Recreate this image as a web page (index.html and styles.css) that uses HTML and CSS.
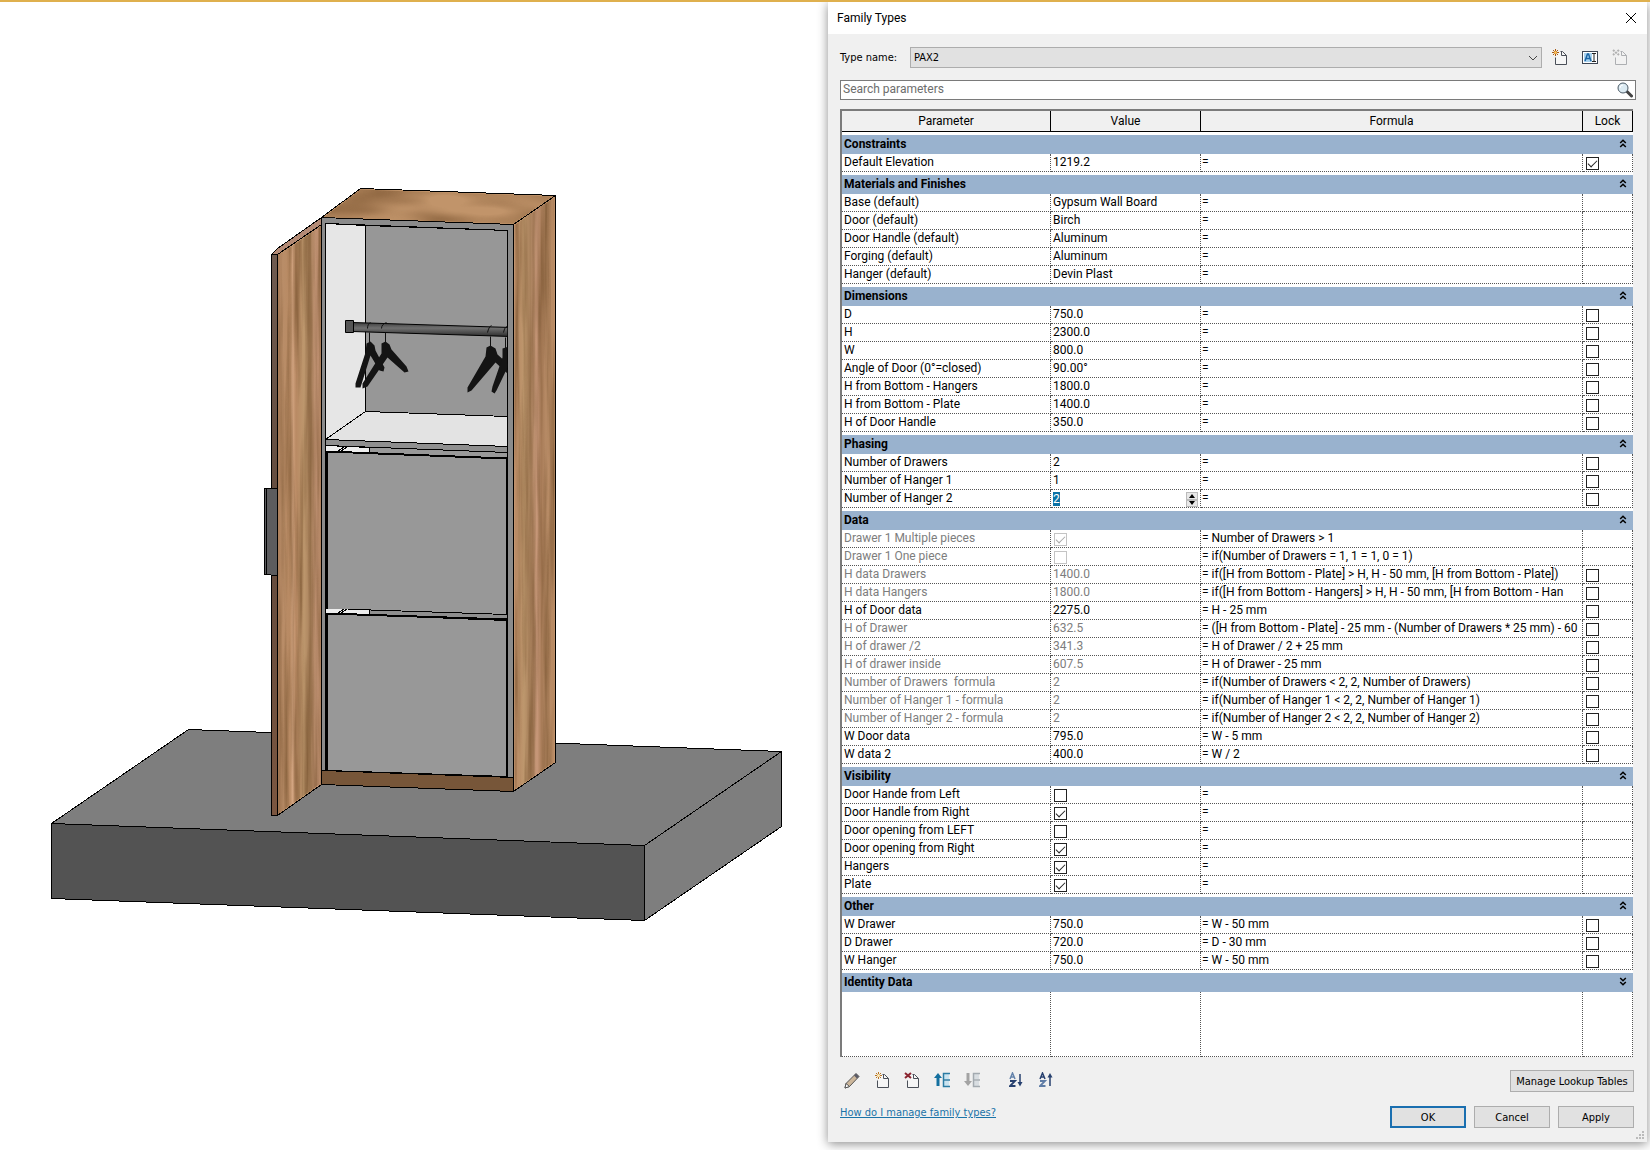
FILE: index.html
```html
<!DOCTYPE html>
<html lang="en">
<head>
  <meta charset="UTF-8">
  <meta name="viewport" content="width=device-width, initial-scale=1.0">
  <title>Family Types</title>
  <link rel="stylesheet" href="styles.css">
</head>
<body>

  <!-- Shared icons -->
  <svg class="defs" width="0" height="0" aria-hidden="true">
    <symbol id="icon-collapse" viewBox="0 0 8 9">
      <path d="M1.2 4 4 1.2 6.8 4M1.2 8 4 5.2 6.8 8" fill="none" stroke="#000" stroke-width="1.5"/>
    </symbol>
    <symbol id="icon-expand" viewBox="0 0 8 9">
      <path d="M1.2 1 4 3.8 6.8 1M1.2 5 4 7.8 6.8 5" fill="none" stroke="#000" stroke-width="1.5"/>
    </symbol>
    <symbol id="icon-page" viewBox="0 0 16 17">
      <path d="M8.5 2.5H10.5L14.5 6.5V15.5H3.5V8.5" fill="#f6f6f6" stroke="#4a4f58"/>
      <path d="M9.5 2.5V6.5H14.5" fill="none" stroke="#4a4f58"/>
    </symbol>
  </svg>

  <main class="workspace">
    <section class="view" aria-label="3D view">
      <svg class="scene" viewBox="-0.5 1.5 828 1148" preserveAspectRatio="xMinYMin meet" role="img" aria-label="Wardrobe with open door">
        <defs>
          <linearGradient id="wood" gradientUnits="userSpaceOnUse" x1="277" y1="0" x2="321" y2="0" spreadMethod="repeat">
            <stop offset="0" stop-color="#a87c58"/>
            <stop offset=".12" stop-color="#b98d68"/>
            <stop offset=".28" stop-color="#b88a63"/>
            <stop offset=".34" stop-color="#d3a581"/>
            <stop offset=".42" stop-color="#b98a64"/>
            <stop offset=".6" stop-color="#bd976d"/>
            <stop offset=".75" stop-color="#a9815c"/>
            <stop offset=".9" stop-color="#c8987a"/>
            <stop offset="1" stop-color="#a87c58"/>
          </linearGradient>
          <linearGradient id="rod" x1="0" y1="0" x2="0" y2="1">
            <stop offset="0" stop-color="#3c3c3c"/>
            <stop offset=".4" stop-color="#707070"/>
            <stop offset="1" stop-color="#2c2c2c"/>
          </linearGradient>
          <linearGradient id="edge" x1="0" y1="0" x2="0" y2="1">
            <stop offset="0" stop-color="#6f5b50"/>
            <stop offset=".5" stop-color="#634b3d"/>
            <stop offset="1" stop-color="#7b5640"/>
          </linearGradient>
          <filter id="grain" x="0" y="0" width="1" height="1" color-interpolation-filters="sRGB">
            <feTurbulence type="fractalNoise" baseFrequency=".16 .006" numOctaves="3" seed="4"/>
            <feColorMatrix values="0 0 0 0 .46  0 0 0 0 .32  0 0 0 0 .18  1.4 0 0 0 -.5"/>
            <feComposite in2="SourceGraphic" operator="in"/>
          </filter>
          <filter id="grain-top" x="0" y="0" width="1" height="1" color-interpolation-filters="sRGB">
            <feTurbulence type="fractalNoise" baseFrequency=".012 .05" numOctaves="2" seed="9"/>
            <feColorMatrix values="0 0 0 0 .48  0 0 0 0 .33  0 0 0 0 .19  1.5 0 0 0 -.5"/>
            <feComposite in2="SourceGraphic" operator="in"/>
          </filter>
          <clipPath id="inside"><path d="M326 223 507 230V446L326 439Z"/></clipPath>
        </defs>

        <!-- floor slab -->
        <g class="solid">
          <path d="M188 729 781 751 644 845 51 823Z" fill="#7e7e7e"/>
          <path d="M51 823 644 845V920L51 898Z" fill="#535353"/>
          <path d="M644 845 781 751V826L644 920Z" fill="#7e7e7e"/>
        </g>

        <!-- cabinet -->
        <g class="solid">
          <path d="M360 188 555 195 513 224 321 217Z" fill="#c1946a"/>
          <path d="M555 195V762L513 791V224Z" fill="url(#wood)"/>
          <path d="M321 217 513 224V791L321 784Z" fill="#8b8b8b"/>
          <path d="M325 223 507 230V777L325 770Z" fill="#999"/>
          <path d="M325 223 365 225V411L325 439Z" fill="#e6e6e6"/>
          <path d="M365 225 507 230V416L365 411Z" fill="#979797"/>
          <path d="M365 411 507 416V446L325 439Z" fill="#e3e3e3"/>
          <path d="M325 439 507 446V452L325 445Z" fill="#8f8f8f"/>
          <path d="M325 445 369 447V453L325 451Z" fill="#eee"/>
          <path d="M337 451 344 446M340 451 347 446" fill="none"/>
          <path d="M325 608 507 614V620L325 614Z" fill="#8f8f8f"/>
          <path d="M325 608 369 609V615L325 613Z" fill="#eee"/>
          <path d="M337 613 344 608M340 613 347 608" fill="none"/>
          <path d="M321 770 513 777V791L321 784Z" fill="#775639"/>
        </g>
        <g class="solid">
          <path d="M326 451 506 458V613L369 608H326Z" fill="#989898" stroke="none"/>
          <path d="M326 613 506 620V776L326 770Z" fill="#989898"/>
          <path d="M326 608V451L506 458V613M326 770V613L506 619V776" fill="none" stroke-width="2"/>
        </g>
        <g stroke="none">
          <path d="M360 189 553 196 513 223 323 217Z" filter="url(#grain-top)"/>
          <path d="M554 197V761L514 789V225Z" filter="url(#grain)"/>
        </g>

        <!-- clothes rod and hangers -->
        <g clip-path="url(#inside)">
          <path d="M352 322 510 327V336L352 331Z" fill="url(#rod)" stroke="#000"/>
          <path d="M345 320H353V332H345Z" fill="#555" stroke="#000"/>
          <g fill="none" stroke="#111">
            <path d="M367 328C367 325 368 323 370 322M369 332V344M381 328C381 325 383 323 386 322M385 332V344"/>
            <path d="M487 332C488 328 489 326 491 325M490 336V348M503 332C504 328 505 326 507 326M505 337V348"/>
          </g>
          <g fill="#141414">
            <path d="M366 343 370 341 374 345 375 350 384 367 383 371 379 370 370 355 360 387 355 387 355 383 365 352Z"/>
            <path d="M381 343 385 341 389 344 391 349 406 366 408 371 404 372 387 357 367 386 362 388 362 383 381 353Z"/>
            <path d="M486 347 490 345 495 348 497 354 508 364V374L495 362 471 390 467 392 467 387 485 356Z"/>
            <path d="M502 348 508 346V365L496 390 494 393 491 391 492 386 502 357Z"/>
          </g>
        </g>

        <!-- open door -->
        <g class="solid">
          <path d="M277 254 321 224V784L277 815Z" fill="url(#wood)"/>
          <path d="M271 254 277 248 321 217V224L277 254Z" fill="#b48b76"/>
          <path d="M271 254H277V815H271Z" fill="url(#edge)"/>
          <path d="M264 488H277V575L264 574Z" fill="#5c5c5e"/>
          <path d="M266 488V574" fill="none"/>
        </g>
        <path d="M278 255 320 226V783L278 813Z" filter="url(#grain)"/>
      </svg>
    </section>

    <form class="dialog" aria-label="Family Types">
      <header class="titlebar">
        <h1>Family Types</h1>
        <button type="button" class="icon-button close" aria-label="Close">
          <svg width="12" height="12" viewBox="0 0 12 12"><path d="M1 1 11 11M11 1 1 11" stroke="#000" fill="none"/></svg>
        </button>
      </header>

      <div class="content">
        <div class="type-row">
          <label for="typeName">Type name:</label>
          <div class="select-box">
            <select id="typeName"><option>PAX2</option></select>
            <svg width="10" height="6" viewBox="0 0 10 6"><path d="M1 1 5 5 9 1" fill="none" stroke="#444"/></svg>
          </div>
          <div class="type-actions">
            <button type="button" class="icon-button" aria-label="New type">
              <svg width="16" height="17" viewBox="0 0 16 17"><use href="#icon-page"/><path d="M3.5 0V7M0 3.5H7M1 1 6 6M6 1 1 6" stroke="#a85a14" fill="none"/><circle cx="3.5" cy="3.5" r="1.5" fill="#ffc35a"/></svg>
            </button>
            <button type="button" class="icon-button" aria-label="Rename type">
              <svg width="16" height="14" viewBox="0 0 16 14"><rect x=".5" y=".5" width="15" height="12" fill="#fff" stroke="#3d4654"/><path d="M2 2H10V11H2Z" fill="#a9d3f0"/><path d="M3 10 5.5 3H6.5L9 10M4 7.5H8" fill="none" stroke="#1c66a5" stroke-width="1.5"/><path d="M10 2.5H14M12 2.5V10.5M10 10.5H14" fill="none" stroke="#222"/></svg>
            </button>
            <button type="button" class="icon-button" aria-label="Delete type" disabled>
              <svg class="faded" width="16" height="17" viewBox="0 0 16 17"><use href="#icon-page"/><path d="M1 1 7 6M7 1 1 6" stroke="#555" stroke-width="2" stroke-dasharray="2 1" fill="none"/></svg>
            </button>
          </div>
        </div>

        <div class="search">
          <input type="text" id="search" placeholder="Search parameters" aria-label="Search parameters">
          <button type="button" class="icon-button" aria-label="Search">
            <svg width="16" height="16" viewBox="0 0 16 16"><path d="M10 9.5 14.5 14" stroke="#444" stroke-width="3" stroke-linecap="round"/><circle cx="6" cy="6" r="5" fill="#dcebf3" stroke="#4b5a66"/><path d="M3 6A3 3 0 0 1 6 3" fill="none" stroke="#fff"/></svg>
          </button>
        </div>

        <table class="params">
          <colgroup>
            <col class="col-name">
            <col class="col-value">
            <col>
            <col class="col-lock">
          </colgroup>
          <thead>
            <tr><th>Parameter</th><th>Value</th><th>Formula</th><th>Lock</th></tr>
          </thead>

          <tbody>
            <tr class="group"><th colspan="4"><div>Constraints<button type="button" class="icon-button" aria-label="Collapse Constraints"><svg width="8" height="9"><use href="#icon-collapse"/></svg></button></div></th></tr>
            <tr><td>Default Elevation</td><td>1219.2</td><td>=</td><td><input type="checkbox" aria-label="Lock Default Elevation" checked></td></tr>
          </tbody>

          <tbody>
            <tr class="group"><th colspan="4"><div>Materials and Finishes<button type="button" class="icon-button" aria-label="Collapse Materials and Finishes"><svg width="8" height="9"><use href="#icon-collapse"/></svg></button></div></th></tr>
            <tr><td>Base (default)</td><td>Gypsum Wall Board</td><td>=</td><td></td></tr>
            <tr><td>Door (default)</td><td>Birch</td><td>=</td><td></td></tr>
            <tr><td>Door Handle (default)</td><td>Aluminum</td><td>=</td><td></td></tr>
            <tr><td>Forging (default)</td><td>Aluminum</td><td>=</td><td></td></tr>
            <tr><td>Hanger (default)</td><td>Devin Plast</td><td>=</td><td></td></tr>
          </tbody>

          <tbody>
            <tr class="group"><th colspan="4"><div>Dimensions<button type="button" class="icon-button" aria-label="Collapse Dimensions"><svg width="8" height="9"><use href="#icon-collapse"/></svg></button></div></th></tr>
            <tr><td>D</td><td>750.0</td><td>=</td><td><input type="checkbox" aria-label="Lock D"></td></tr>
            <tr><td>H</td><td>2300.0</td><td>=</td><td><input type="checkbox" aria-label="Lock H"></td></tr>
            <tr><td>W</td><td>800.0</td><td>=</td><td><input type="checkbox" aria-label="Lock W"></td></tr>
            <tr><td>Angle of Door (0°=closed)</td><td>90.00°</td><td>=</td><td><input type="checkbox" aria-label="Lock Angle of Door"></td></tr>
            <tr><td>H from Bottom - Hangers</td><td>1800.0</td><td>=</td><td><input type="checkbox" aria-label="Lock H from Bottom - Hangers"></td></tr>
            <tr><td>H from Bottom - Plate</td><td>1400.0</td><td>=</td><td><input type="checkbox" aria-label="Lock H from Bottom - Plate"></td></tr>
            <tr><td>H of Door Handle</td><td>350.0</td><td>=</td><td><input type="checkbox" aria-label="Lock H of Door Handle"></td></tr>
          </tbody>

          <tbody>
            <tr class="group"><th colspan="4"><div>Phasing<button type="button" class="icon-button" aria-label="Collapse Phasing"><svg width="8" height="9"><use href="#icon-collapse"/></svg></button></div></th></tr>
            <tr><td>Number of Drawers</td><td>2</td><td>=</td><td><input type="checkbox" aria-label="Lock Number of Drawers"></td></tr>
            <tr><td>Number of Hanger 1</td><td>1</td><td>=</td><td><input type="checkbox" aria-label="Lock Number of Hanger 1"></td></tr>
            <tr>
              <td><label for="hanger2">Number of Hanger 2</label></td>
              <td>
                <div class="spinner">
                  <input type="text" id="hanger2" value="2">
                  <div class="steps">
                    <button type="button" class="icon-button" aria-label="Increase"><svg width="6" height="4" viewBox="0 0 6 4"><path d="M0 4 3 0 6 4Z"/></svg></button>
                    <button type="button" class="icon-button" aria-label="Decrease"><svg width="6" height="4" viewBox="0 0 6 4"><path d="M0 0 3 4 6 0Z"/></svg></button>
                  </div>
                </div>
              </td>
              <td>=</td><td><input type="checkbox" aria-label="Lock Number of Hanger 2"></td>
            </tr>
          </tbody>

          <tbody>
            <tr class="group"><th colspan="4"><div>Data<button type="button" class="icon-button" aria-label="Collapse Data"><svg width="8" height="9"><use href="#icon-collapse"/></svg></button></div></th></tr>
            <tr class="readonly"><td>Drawer 1 Multiple pieces</td><td><input type="checkbox" aria-label="Drawer 1 Multiple pieces" checked disabled></td><td>= Number of Drawers &gt; 1</td><td></td></tr>
            <tr class="readonly"><td>Drawer 1 One piece</td><td><input type="checkbox" aria-label="Drawer 1 One piece" disabled></td><td>= if(Number of Drawers = 1, 1 = 1, 0 = 1)</td><td></td></tr>
            <tr class="readonly"><td>H data Drawers</td><td>1400.0</td><td>= if([H from Bottom - Plate] &gt; H, H - 50 mm, [H from Bottom - Plate])</td><td><input type="checkbox" aria-label="Lock H data Drawers"></td></tr>
            <tr class="readonly"><td>H data Hangers</td><td>1800.0</td><td>= if([H from Bottom - Hangers] &gt; H, H - 50 mm, [H from Bottom - Han</td><td><input type="checkbox" aria-label="Lock H data Hangers"></td></tr>
            <tr><td>H of Door data</td><td>2275.0</td><td>= H - 25 mm</td><td><input type="checkbox" aria-label="Lock H of Door data"></td></tr>
            <tr class="readonly"><td>H of Drawer</td><td>632.5</td><td>= ([H from Bottom - Plate] - 25 mm - (Number of Drawers * 25 mm) - 60</td><td><input type="checkbox" aria-label="Lock H of Drawer"></td></tr>
            <tr class="readonly"><td>H of drawer /2</td><td>341.3</td><td>= H of Drawer / 2 + 25 mm</td><td><input type="checkbox" aria-label="Lock H of drawer /2"></td></tr>
            <tr class="readonly"><td>H of drawer inside</td><td>607.5</td><td>= H of Drawer - 25 mm</td><td><input type="checkbox" aria-label="Lock H of drawer inside"></td></tr>
            <tr class="readonly"><td>Number of Drawers&nbsp; formula</td><td>2</td><td>= if(Number of Drawers &lt; 2, 2, Number of Drawers)</td><td><input type="checkbox" aria-label="Lock Number of Drawers formula"></td></tr>
            <tr class="readonly"><td>Number of Hanger 1 - formula</td><td>2</td><td>= if(Number of Hanger 1 &lt; 2, 2, Number of Hanger 1)</td><td><input type="checkbox" aria-label="Lock Number of Hanger 1 - formula"></td></tr>
            <tr class="readonly"><td>Number of Hanger 2 - formula</td><td>2</td><td>= if(Number of Hanger 2 &lt; 2, 2, Number of Hanger 2)</td><td><input type="checkbox" aria-label="Lock Number of Hanger 2 - formula"></td></tr>
            <tr><td>W Door data</td><td>795.0</td><td>= W - 5 mm</td><td><input type="checkbox" aria-label="Lock W Door data"></td></tr>
            <tr><td>W data 2</td><td>400.0</td><td>= W / 2</td><td><input type="checkbox" aria-label="Lock W data 2"></td></tr>
          </tbody>

          <tbody>
            <tr class="group"><th colspan="4"><div>Visibility<button type="button" class="icon-button" aria-label="Collapse Visibility"><svg width="8" height="9"><use href="#icon-collapse"/></svg></button></div></th></tr>
            <tr><td><label for="handleLeft">Door Hande from Left</label></td><td><input type="checkbox" id="handleLeft"></td><td>=</td><td></td></tr>
            <tr><td><label for="handleRight">Door Handle from Right</label></td><td><input type="checkbox" id="handleRight" checked></td><td>=</td><td></td></tr>
            <tr><td><label for="openLeft">Door opening from LEFT</label></td><td><input type="checkbox" id="openLeft"></td><td>=</td><td></td></tr>
            <tr><td><label for="openRight">Door opening from Right</label></td><td><input type="checkbox" id="openRight" checked></td><td>=</td><td></td></tr>
            <tr><td><label for="hangers">Hangers</label></td><td><input type="checkbox" id="hangers" checked></td><td>=</td><td></td></tr>
            <tr><td><label for="plate">Plate</label></td><td><input type="checkbox" id="plate" checked></td><td>=</td><td></td></tr>
          </tbody>

          <tbody>
            <tr class="group"><th colspan="4"><div>Other<button type="button" class="icon-button" aria-label="Collapse Other"><svg width="8" height="9"><use href="#icon-collapse"/></svg></button></div></th></tr>
            <tr><td>W Drawer</td><td>750.0</td><td>= W - 50 mm</td><td><input type="checkbox" aria-label="Lock W Drawer"></td></tr>
            <tr><td>D Drawer</td><td>720.0</td><td>= D - 30 mm</td><td><input type="checkbox" aria-label="Lock D Drawer"></td></tr>
            <tr><td>W Hanger</td><td>750.0</td><td>= W - 50 mm</td><td><input type="checkbox" aria-label="Lock W Hanger"></td></tr>
          </tbody>

          <tbody>
            <tr class="group"><th colspan="4"><div>Identity Data<button type="button" class="icon-button" aria-label="Expand Identity Data"><svg width="8" height="9"><use href="#icon-expand"/></svg></button></div></th></tr>
            <tr class="blank"><td></td><td></td><td></td><td></td></tr>
          </tbody>
        </table>

        <div class="toolbar">
          <div class="tools">
            <button type="button" class="icon-button" aria-label="Edit parameter">
              <svg width="16" height="17" viewBox="0 0 16 17"><path d="M1 16 2 11.5 12 1.5 15 4.5 5.5 14.5Z" fill="#cdb79b" stroke="#555"/><path d="M10 3.5 12 1.5 15 4.5 13 6.5Z" fill="#5b5b66"/><path d="M1 16 2 11.5 5.5 14.5Z" fill="#fff" stroke="#555"/></svg>
            </button>
            <button type="button" class="icon-button" aria-label="New parameter">
              <svg width="16" height="17" viewBox="0 0 16 17"><use href="#icon-page"/><path d="M4.5 0V7M1 3.5H8M2 1 7 6M7 1 2 6" stroke="#b87422" fill="none"/><circle cx="4.5" cy="3.5" r="1.5" fill="#fff0c0"/></svg>
            </button>
            <button type="button" class="icon-button" aria-label="Delete parameter">
              <svg width="16" height="17" viewBox="0 0 16 17"><use href="#icon-page"/><path d="M1 1 7 6M7 1 1 6" stroke="#8b2530" stroke-width="2" fill="none"/></svg>
            </button>
            <button type="button" class="icon-button" aria-label="Move up">
              <svg width="16" height="17" viewBox="0 0 16 17"><path d="M4 1 8 6H5.5V14H2.5V6H0Z" fill="#14709f"/><path d="M10 2H15V7H10ZM10 9H15V14H10Z" fill="#cbe4f0"/><path d="M16 1.5H9.5V14.5H16M9.5 8H16" fill="none" stroke="#2b7ba3" stroke-width="1.5"/></svg>
            </button>
            <button type="button" class="icon-button" aria-label="Move down">
              <svg width="16" height="17" viewBox="0 0 16 17"><path d="M4 14 8 9H5.5V1H2.5V9H0Z" fill="#a3a3a3"/><path d="M10 2H15V7H10ZM10 9H15V14H10Z" fill="#d9dee2"/><path d="M16 1.5H9.5V14.5H16M9.5 8H16" fill="none" stroke="#a3aab0" stroke-width="1.5"/></svg>
            </button>
            <button type="button" class="icon-button sort" aria-label="Sort ascending">
              <svg width="16" height="17" viewBox="0 0 16 17"><path d="M1 7 3.5 1 6 7M2 5H5" fill="none" stroke="#6483ab" stroke-width="1.5"/><path d="M1 9H6L1 14H6.5" fill="none" stroke="#27406f" stroke-width="1.8"/><path d="M11 2V12" stroke="#27406f" stroke-width="1.5"/><path d="M8.5 10H13.5L11 14.5Z" fill="#27406f"/></svg>
            </button>
            <button type="button" class="icon-button" aria-label="Sort descending">
              <svg width="16" height="17" viewBox="0 0 16 17"><path d="M1 7 3.5 1 6 7M2 5H5" fill="none" stroke="#27406f" stroke-width="1.5"/><path d="M1 9H6L1 14H6.5" fill="none" stroke="#5f7ca6" stroke-width="1.8"/><path d="M11 4V14" stroke="#27406f" stroke-width="1.5"/><path d="M8.5 5.5H13.5L11 1Z" fill="#27406f"/></svg>
            </button>
          </div>
          <button type="button" class="button lookup">Manage Lookup Tables</button>
        </div>

        <footer class="footer">
          <a href="#help">How do I manage family types?</a>
          <div class="actions">
            <button type="submit" class="button primary">OK</button>
            <button type="button" class="button">Cancel</button>
            <button type="button" class="button">Apply</button>
          </div>
        </footer>
      </div>

      <svg class="grip" width="8" height="8" viewBox="0 0 8 8"><path d="M6 0H8V2H6ZM3 3H5V5H3ZM6 3H8V5H6ZM0 6H2V8H0ZM3 6H5V8H3ZM6 6H8V8H6Z" fill="#bbb"/></svg>
    </form>
  </main>

  <script>
    // the value being edited starts out selected
    const hanger2 = document.getElementById('hanger2');
    hanger2.focus();
    hanger2.select();
  </script>

</body>
</html>
```

FILE: styles.css
```css
* {
  box-sizing: border-box;
}

body {
  margin: 0;
  min-height: 100vh;
  border-top: 2px solid #dfb04e;
  background-color: #fff;
  font-family: Roboto, "Open Sans", sans-serif;
  font-size: 12px;
  color: #000;
  overflow-x: hidden;
}

.defs {
  position: absolute;
}

.workspace {
  display: grid;
  grid-template-columns: 828fr 819fr;
  align-items: start;
  padding-right: 3px;
  padding-bottom: 8px;
}

.scene {
  display: block;
  width: 100%;
}

.solid {
  stroke: #000;
  stroke-linejoin: round;
  shape-rendering: crispEdges;
}

/* dialog window */
.dialog {
  position: relative;
  background-color: #f0f0f0;
  box-shadow: 0 2px 10px rgba(0, 0, 0, 0.45);
}

.titlebar {
  display: flex;
  justify-content: space-between;
  align-items: center;
  height: 32px;
  padding: 0 10px 0 9px;
  background-color: #fff;
}

.titlebar h1 {
  margin: 0;
  font-size: 12px;
  font-weight: normal;
  line-height: 16px;
}

.content {
  padding: 13px 11px 14px 12px;
}

.icon-button {
  display: flex;
  align-items: center;
  justify-content: center;
  padding: 0;
  border: none;
  background: none;
}

.type-row {
  display: flex;
  align-items: center;
  margin-bottom: 12px;
}

.type-row label {
  width: 70px;
}

.type-row label,
.select-box select,
.button,
.footer a {
  font-family: "DejaVu Sans Condensed", "Open Sans", sans-serif;
  font-size: 11px;
}

.select-box {
  position: relative;
  flex: 1;
}

.select-box select {
  display: block;
  width: 100%;
  height: 21px;
  padding: 0 3px;
  appearance: none;
  border: 1px solid #adadad;
  border-radius: 0;
  background-color: #e1e1e1;
  color: #000;
}

.select-box svg {
  position: absolute;
  right: 4px;
  top: 8px;
}

.type-actions {
  display: flex;
  gap: 14px;
  padding: 0 8px 0 10px;
}

.faded {
  opacity: 0.4;
}

.search {
  display: flex;
  height: 20px;
  padding-right: 2px;
  margin-bottom: 9px;
  border: 1px solid #7a7a7a;
  background-color: #fff;
}

.search input {
  flex: 1;
  padding: 0 2px 2px;
  border: none;
  outline: none;
  background: none;
  font-family: inherit;
  font-size: 12px;
}

.search input::placeholder {
  color: #6d6d6d;
}

/* parameter table */
.params {
  width: calc(100% - 3px);
  table-layout: fixed;
  border-collapse: separate;
  border-spacing: 0;
  border-top: 2px solid #7b7b7b;
  border-left: 2px solid #7b7b7b;
  background-color: #fff;
}

.col-name {
  width: 209px;
}

.col-value {
  width: 150px;
}

.col-lock {
  width: 50px;
}

.params thead th {
  height: 21px;
  padding: 0;
  border-right: 1px solid #000;
  border-bottom: 1px solid #000;
  background-color: #f0f0f0;
  font-weight: normal;
  line-height: 18px;
}

.params td {
  height: 18px;
  padding: 0 2px;
  border-right: 1px dotted #555;
  border-bottom: 1px dotted #555;
  line-height: 17px;
  white-space: nowrap;
  overflow: hidden;
  vertical-align: top;
}

.params td:nth-child(3) {
  padding: 0 0 0 1px;
}

.params .group th {
  height: 22px;
  padding: 0;
  border-top: 3px solid #fff;
  background-color: #99b2ce;
  text-align: left;
  font-size: 12px;
  line-height: 18px;
}

.group div {
  display: flex;
  justify-content: space-between;
  align-items: center;
  height: 19px;
  padding: 0 6px 2px 2px;
}

.params .blank td {
  height: 65px;
}

.readonly td:nth-child(-n+2) {
  color: #7d7d7d;
}

.params input[type="checkbox"] {
  display: block;
  width: 13px;
  height: 13px;
  margin: 3px 0 0 1px;
  appearance: none;
  border: 1px solid #222;
  background-color: #fff;
}

.params input[type="checkbox"]:checked::after {
  content: "";
  display: block;
  width: 8px;
  height: 4px;
  margin: 2px 1px;
  border-left: 1px solid #222;
  border-bottom: 1px solid #222;
  transform: rotate(-45deg);
}

.params input[type="checkbox"]:disabled {
  border-color: #c4c4c4;
}

.params input[type="checkbox"]:disabled::after {
  border-color: #aaa;
}

.spinner {
  display: flex;
  height: 17px;
}

.spinner input {
  flex: 1;
  min-width: 0;
  padding: 0;
  border: none;
  outline: none;
  background: none;
  font-family: inherit;
  font-size: 12px;
}

.spinner input::selection {
  background-color: #0b72a5;
  color: #fff;
}

.steps {
  display: flex;
  flex-direction: column;
  width: 12px;
  padding-top: 2px;
}

.steps button {
  flex: 1;
  border: 1px solid #bbb;
  background-color: #e8e8e8;
}

/* bottom area */
.toolbar {
  display: flex;
  justify-content: space-between;
  align-items: flex-start;
  padding-right: 2px;
  margin-top: 13px;
}

.tools {
  display: flex;
  gap: 14px;
  padding: 2px 0 0 4px;
}

.tools .sort {
  margin-left: 15px;
}

.footer {
  display: flex;
  justify-content: space-between;
  align-items: flex-start;
  padding-right: 2px;
  margin-top: 14px;
}

.footer a {
  color: #1a73a8;
}

.actions {
  display: flex;
  gap: 8px;
}

.button {
  width: 76px;
  height: 22px;
  padding: 0;
  border: 1px solid #adadad;
  background-color: #e1e1e1;
  color: #000;
}

.lookup {
  width: 124px;
}

.primary {
  border: 2px solid #1a6fb0;
}

.grip {
  position: absolute;
  right: 3px;
  bottom: 3px;
}
```
